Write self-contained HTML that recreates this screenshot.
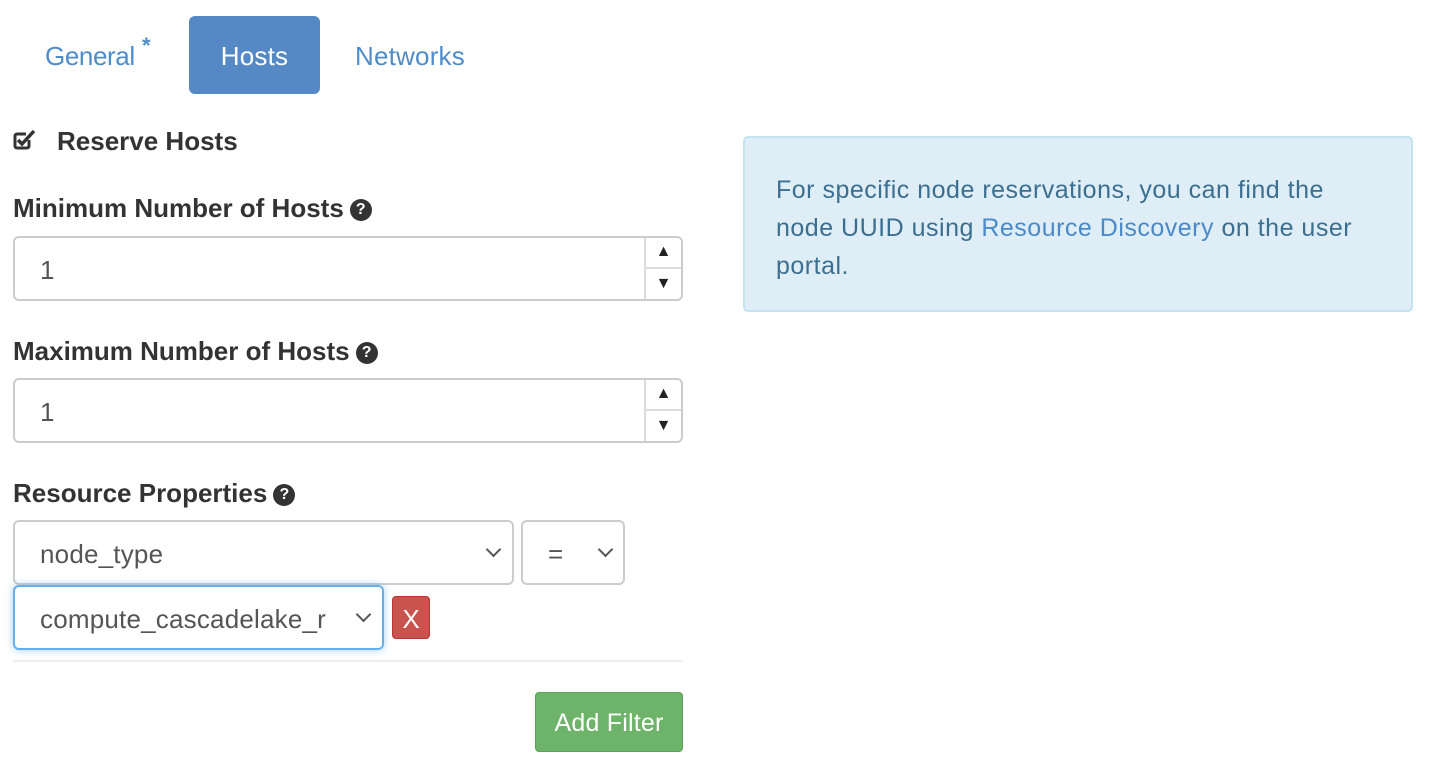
<!DOCTYPE html><html><head><style>
body{margin:0;width:1430px;height:773px;background:#fff;font-family:"Liberation Sans",sans-serif;position:relative;overflow:hidden;letter-spacing:0.2px}
.a{position:absolute}
.tab{font-size:26px;color:#4f8cc9;top:41px}
.lbl{font-size:26px;font-weight:bold;color:#333;left:13px;letter-spacing:0}
.q{display:inline-block;width:22px;height:22px;border-radius:50%;background:#333;color:#fff;font-size:16px;text-align:center;line-height:22px;vertical-align:3px;margin-left:6px;letter-spacing:0}
.inp{border:2px solid #ccc;border-radius:6px;box-sizing:border-box;background:#fff;font-size:26px;color:#555}
.spin{position:absolute;right:0;top:0;width:37px;height:100%;border-left:2px solid #ddd;box-sizing:border-box}
.spin div{height:50%;box-sizing:border-box;display:flex;align-items:center;justify-content:center;font-size:16px;color:#222;letter-spacing:0}
.chev{position:absolute;top:22px;width:9px;height:9px;border-right:2px solid #555;border-bottom:2px solid #555;transform:rotate(45deg)}
</style></head><body>
<div class="a tab" style="left:45px;letter-spacing:-0.4px">General<span style="position:absolute;left:97px;top:-8px;font-size:22px;font-weight:bold">*</span></div>
<div class="a" style="left:189px;top:16px;width:131px;height:78px;background:#5589c6;border-radius:6px;color:#fff;font-size:26px;text-align:center;line-height:80px">Hosts</div>
<div class="a tab" style="left:355px">Networks</div>

<svg class="a" style="left:12px;top:128px" width="26" height="24" viewBox="0 0 26 24"><path d="M17 12v6a2 2 0 0 1-2 2H5a2 2 0 0 1-2-2V8a2 2 0 0 1 2-2h9" fill="none" stroke="#333" stroke-width="3"/><path d="M6 12l4 4 12-13" fill="none" stroke="#333" stroke-width="3.5"/></svg>
<div class="a lbl" style="left:57px;top:126px">Reserve Hosts</div>

<div class="a lbl" style="top:193px">Minimum Number of Hosts<span class="q">?</span></div>
<div class="a inp" style="left:13px;top:236px;width:670px;height:65px"><span class="a" style="left:25px;top:17px">1</span><div class="spin"><div style="border-bottom:2px solid #ddd">▲</div><div>▼</div></div></div>

<div class="a lbl" style="top:336px">Maximum Number of Hosts<span class="q">?</span></div>
<div class="a inp" style="left:13px;top:378px;width:670px;height:65px"><span class="a" style="left:25px;top:17px">1</span><div class="spin"><div style="border-bottom:2px solid #ddd">▲</div><div>▼</div></div></div>

<div class="a lbl" style="top:478px">Resource Properties<span class="q">?</span></div>
<div class="a inp" style="left:13px;top:520px;width:501px;height:65px"><span class="a" style="left:25px;top:17px">node_type</span><div class="chev" style="left:473px"></div></div>
<div class="a inp" style="left:521px;top:520px;width:104px;height:65px"><span class="a" style="left:25px;top:17px">=</span><div class="chev" style="left:77px"></div></div>
<div class="a inp" style="left:13px;top:585px;width:371px;height:65px;border-color:#66afe9;box-shadow:0 0 8px rgba(102,175,233,.6);overflow:hidden"><span class="a" style="left:25px;top:17px;white-space:nowrap">compute_cascadelake_r</span><div class="a" style="left:330px;top:0;width:40px;height:62px;background:#fff"></div><div class="chev" style="left:343px"></div></div>
<div class="a" style="left:392px;top:596px;width:38px;height:43px;background:#c9534f;border:1px solid #b33;box-sizing:border-box;border-radius:4px;color:#fff;font-size:26px;text-align:center;line-height:44px;letter-spacing:0">X</div>
<div class="a" style="left:13px;top:660px;width:670px;height:2px;background:#eee"></div>
<div class="a" style="left:535px;top:692px;width:148px;height:60px;background:#6db36a;border:1px solid #5aa357;box-sizing:border-box;border-radius:4px;color:#fff;font-size:25px;text-align:center;line-height:60px">Add Filter</div>

<div class="a" style="left:743px;top:136px;width:670px;height:176px;background:#dfedf7;border:2px solid #c4e3ef;box-sizing:border-box;border-radius:5px;padding:33px 50px 0 31px;color:#3a6f8f;font-size:25px;line-height:38px;letter-spacing:0.5px">For specific node reservations, you can find the node UUID using <span style="color:#4a8ac8">Resource Discovery</span> on the user portal.</div>
</body></html>
